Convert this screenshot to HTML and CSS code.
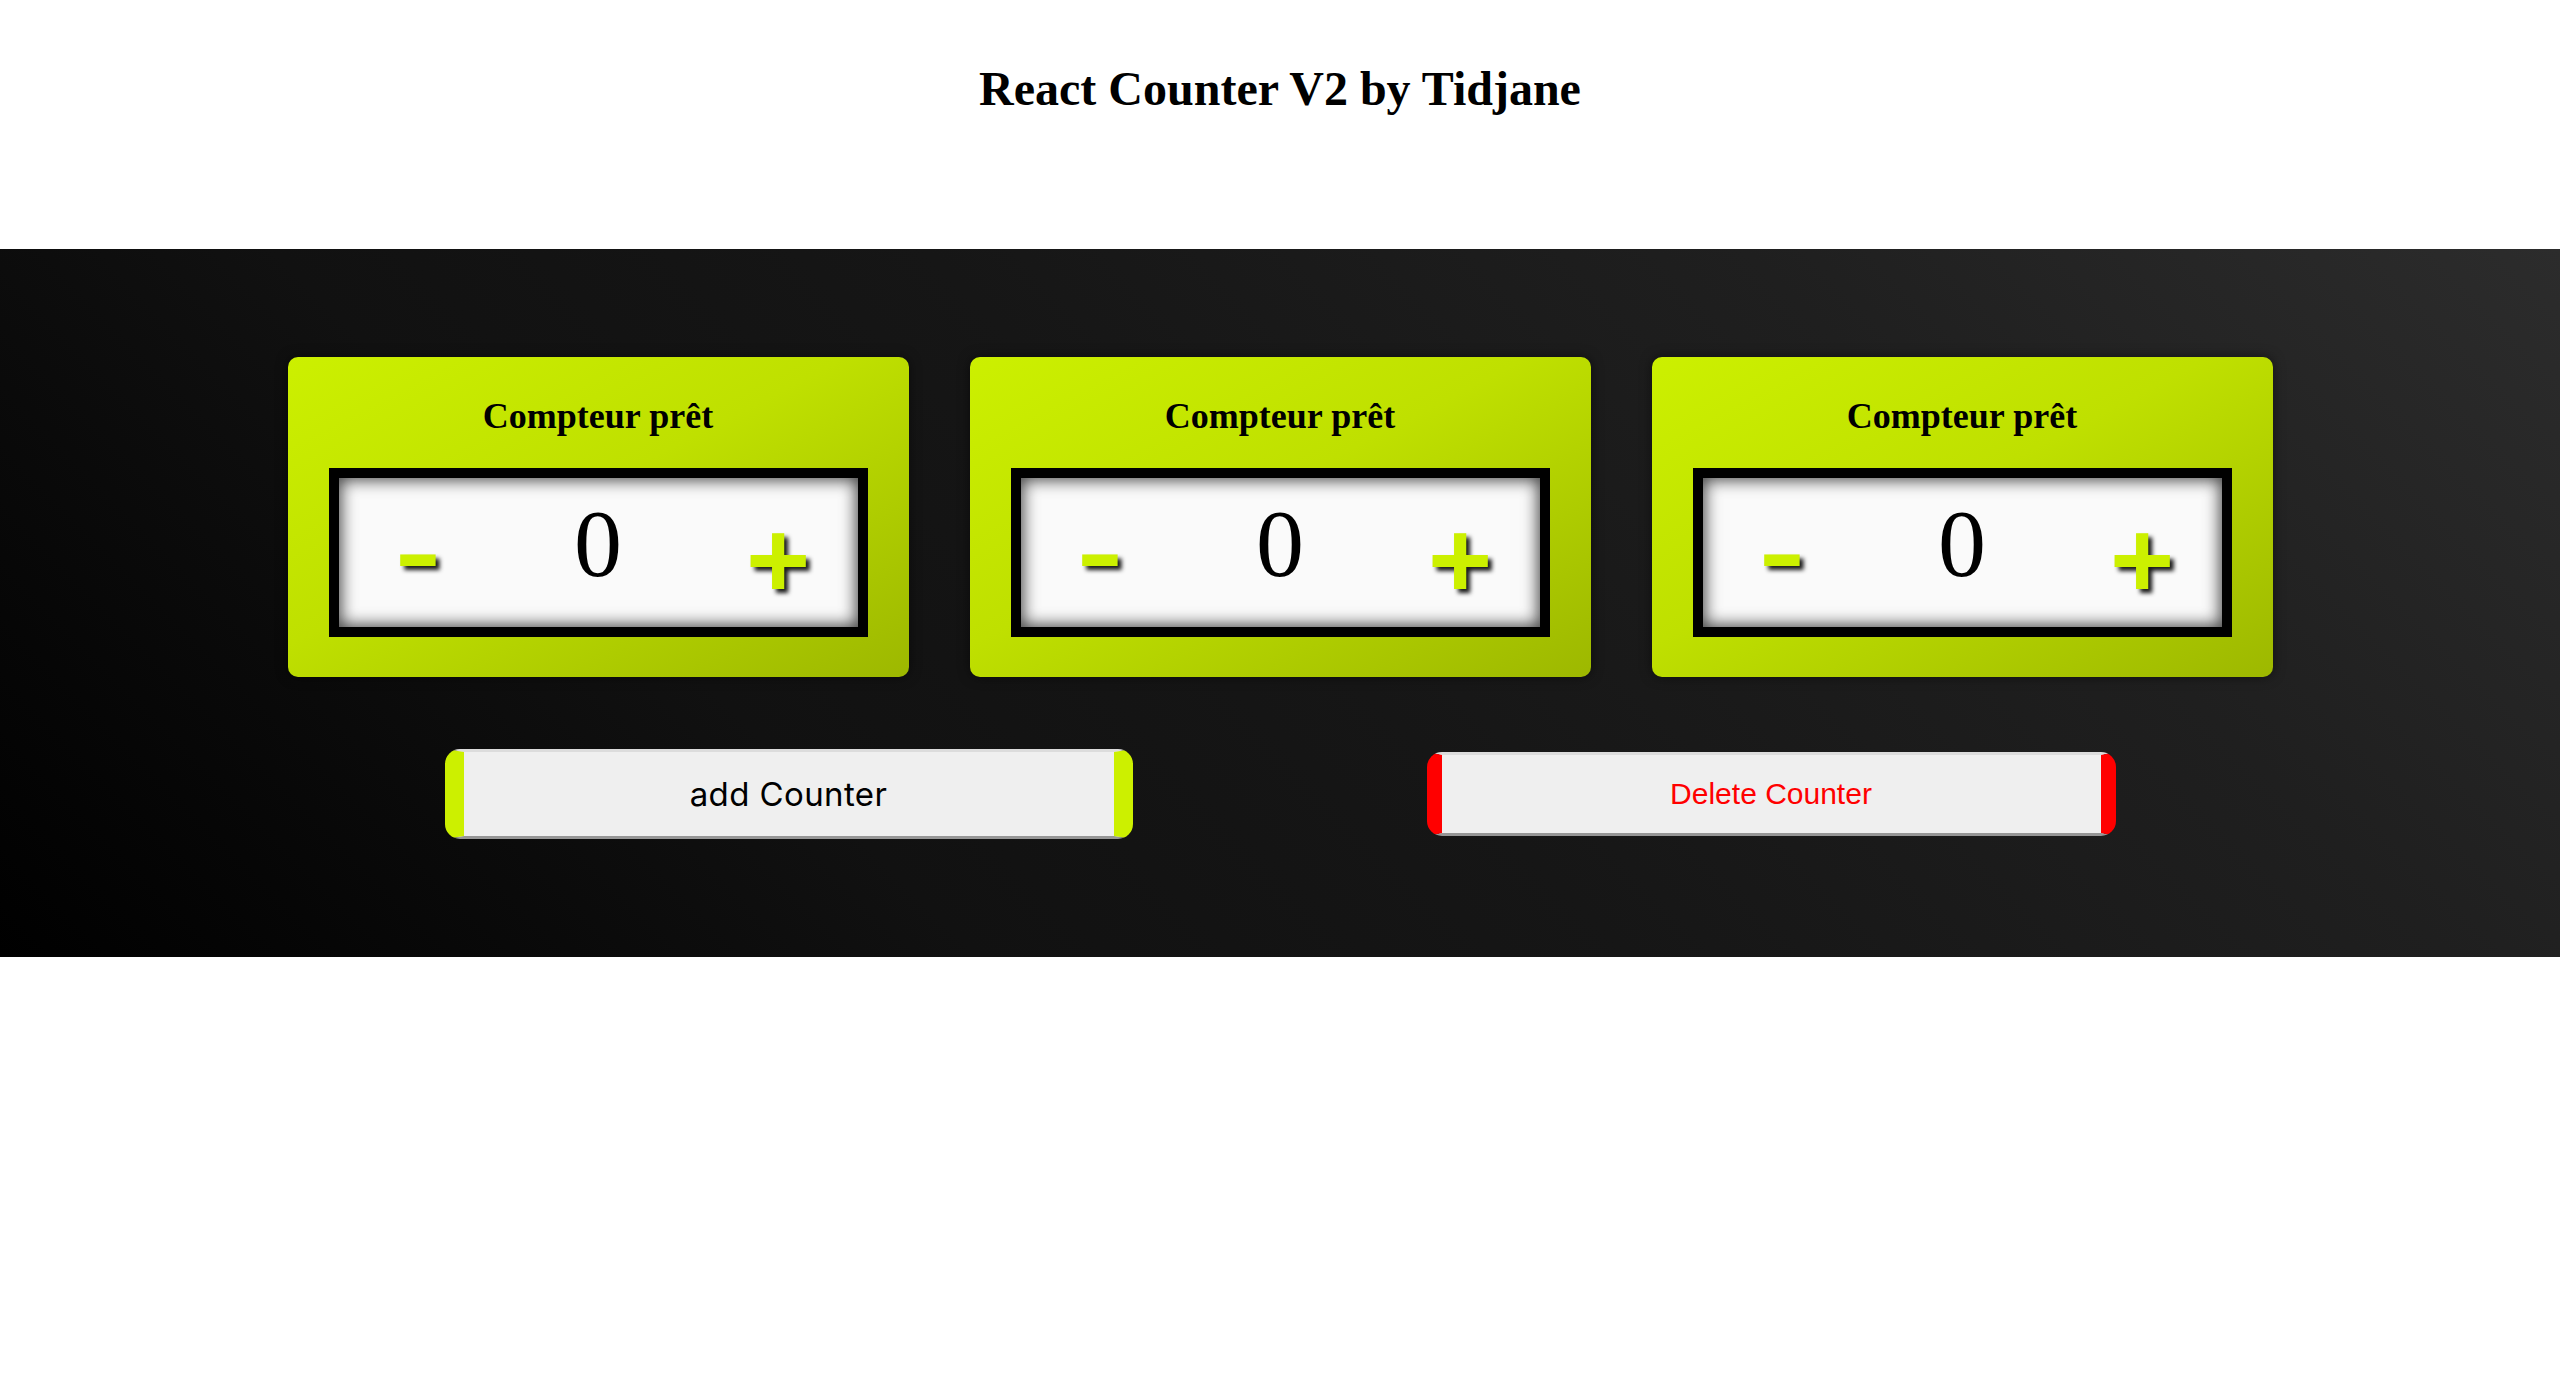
FILE: index.html
```html
<!DOCTYPE html>
<html lang="fr">
<head>
<meta charset="utf-8">
<title>React Counter V2 by Tidjane</title>
<link rel="stylesheet" href="styles.css">
</head>
<body>
<header class="header">
  <h1 class="title">React Counter V2 by Tidjane</h1>
</header>
<main class="stage">
  <div class="counters">
    <section class="card">
      <h2 class="card-title">Compteur prêt</h2>
      <div class="display">
        <button class="step step-minus">-</button>
        <span class="value">0</span>
        <button class="step step-plus">+</button>
      </div>
    </section>
    <section class="card">
      <h2 class="card-title">Compteur prêt</h2>
      <div class="display">
        <button class="step step-minus">-</button>
        <span class="value">0</span>
        <button class="step step-plus">+</button>
      </div>
    </section>
    <section class="card">
      <h2 class="card-title">Compteur prêt</h2>
      <div class="display">
        <button class="step step-minus">-</button>
        <span class="value">0</span>
        <button class="step step-plus">+</button>
      </div>
    </section>
  </div>
  <div class="actions">
    <button class="btn btn-add">add Counter</button>
    <button class="btn btn-delete">Delete Counter</button>
  </div>
</main>
</body>
</html>
```

FILE: styles.css
```css
html, body {
  margin: 0;
  padding: 0;
  background: #ffffff;
}

body {
  font-family: "Liberation Serif", "Times New Roman", serif;
  color: #000;
}

.header {
  height: 249px;
  box-sizing: border-box;
  padding-top: 62px;
}

.title {
  margin: 0;
  text-align: center;
  font-size: 48px;
  line-height: 53px;
  font-weight: bold;
}

.stage {
  height: 708px;
  box-sizing: border-box;
  padding-top: 108px;
  background: linear-gradient(45deg, #000000 0%, #111111 30%, #161616 50%, #1f1f1f 75%, #2c2c2c 100%);
}

.counters {
  display: flex;
  justify-content: center;
  gap: 61px;
}

.card {
  width: 621px;
  height: 320px;
  box-sizing: border-box;
  padding-top: 39px;
  border-radius: 10px;
  background: linear-gradient(to bottom right, #ccf000 0%, #bfe000 45%, #9db800 100%);
  box-shadow: 0 0 12px rgba(0, 0, 0, 0.5);
  display: flex;
  flex-direction: column;
  align-items: center;
}

.card-title {
  margin: 0;
  font-size: 36px;
  line-height: 40px;
  font-weight: bold;
  text-align: center;
}

.display {
  margin-top: 32px;
  width: 539px;
  height: 169px;
  box-sizing: border-box;
  border: 10px solid #000;
  background: #fafafa;
  box-shadow: inset 0 0 16px 2px rgba(0, 0, 0, 0.75);
  display: flex;
  justify-content: center;
  align-items: flex-start;
  gap: 60px;
}

.value {
  width: 120px;
  margin-top: 18px;
  text-align: center;
  font-size: 96px;
  line-height: 1;
  font-weight: normal;
}

.step {
  width: 120px;
  padding: 0;
  border: none;
  background: none;
  text-align: center;
  font-weight: bold;
  line-height: 1;
  color: #ccf000;
  text-shadow: 4px 4px 4px rgba(0, 0, 0, 0.9);
  cursor: pointer;
}

.step-minus {
  font-family: "Liberation Serif", "Times New Roman", serif;
  font-size: 136px;
  margin-top: 0;
}

.step-plus {
  font-family: "Liberation Sans", Arial, sans-serif;
  font-size: 110px;
  margin-top: 27px;
}

.actions {
  margin-top: 72px;
  display: flex;
  justify-content: center;
  align-items: center;
  gap: 294px;
}

.btn {
  box-sizing: border-box;
  padding: 0;
  background: #efefef;
  border-top: 3px solid #dcdcdc;
  border-bottom: 3px solid #969696;
  border-radius: 15px;
  cursor: pointer;
}

.btn-add {
  width: 688px;
  height: 90px;
  border-left: 19px solid #ccf000;
  border-right: 19px solid #ccf000;
  font-family: Inter, "Noto Sans", sans-serif;
  font-size: 33px;
  letter-spacing: 0.4px;
  color: #000;
}

.btn-delete {
  width: 689px;
  height: 84px;
  border-left: 15px solid #ff0000;
  border-right: 15px solid #ff0000;
  font-family: "Liberation Sans", Arial, sans-serif;
  font-size: 30px;
  color: #ff0000;
}
```
